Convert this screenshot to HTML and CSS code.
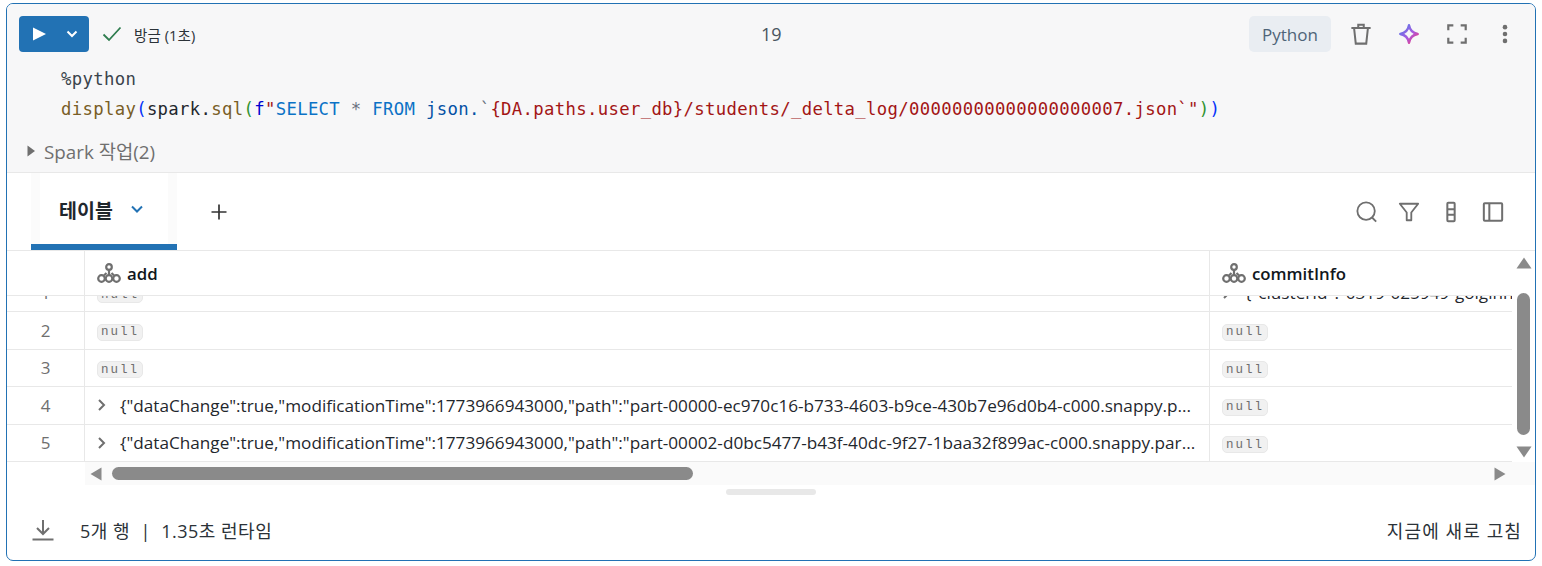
FILE: index.html
```html
<!DOCTYPE html>
<html lang="ko">
<head>
<meta charset="utf-8">
<title>Notebook cell</title>
<link rel="stylesheet" href="styles.css">
</head>
<body>
<div class="cell">
  <section class="editor">
    <div class="toolbar">
      <div class="run">
        <svg class="run-play" viewBox="0 0 14 14"><path d="M1 0.500v13L14 7z" fill="#fff"/></svg>
        <svg class="run-caret" viewBox="0 0 14 14"><path d="M2.500 4.500 7 9l4.500-4.500" fill="none" stroke="#fff" stroke-width="2"/></svg>
      </div>
      <svg class="check" viewBox="0 0 20 16"><path d="M1.500 8.500 7 14 18.500 1.500" fill="none" stroke="#2f7d4f" stroke-width="1.800"/></svg>
      <span class="status">방금 (1초)</span>
      <span class="cell-no">19</span>
      <div class="tools">
        <span class="lang">Python</span>
        <svg class="tool" viewBox="0 0 24 24" fill="none" stroke="#6f6f6f" stroke-width="2.200"><path d="M1.500 5.500h21M9 5V2h6v3M4.500 6l1.800 16.500h11.400L19.500 6"/></svg>
        <svg class="tool" viewBox="0 0 24 24" fill="none" stroke="url(#spark)" stroke-width="2.600"><defs><linearGradient id="spark" x1="0" y1="0" x2="1" y2="1"><stop offset="0" stop-color="#4f7dea"/><stop offset=".55" stop-color="#a85be0"/><stop offset="1" stop-color="#f8356f"/></linearGradient></defs><path d="M12 2.500C13 8 15.500 11 21.500 12 15.500 13 13 16 12 21.500 11 16 8.500 13 2.500 12 8.500 11 11 8 12 2.500Z" stroke-linejoin="round"/></svg>
        <svg class="tool" viewBox="0 0 24 24" fill="none" stroke="#6f6f6f" stroke-width="2.400"><path d="M8 2.500H2.500V8M16 2.500h5.500V8M2.500 16v5.500H8M21.500 16v5.500H16"/></svg>
        <svg class="tool" viewBox="0 0 24 24" fill="#6f6f6f"><circle cx="12" cy="4.500" r="2.500"/><circle cx="12" cy="12" r="2.500"/><circle cx="12" cy="19.500" r="2.500"/></svg>
      </div>
    </div>
    <pre class="code"><span class="k-mag">%python</span>
<span class="k-fn">display</span><span class="k-p1">(</span>spark.<span class="k-fn">sql</span><span class="k-p2">(</span><span class="k-kw">f</span><span class="k-str">"</span><span class="k-sql">SELECT</span> <span class="k-star">*</span> <span class="k-sql">FROM</span> <span class="k-json">json.</span><span class="k-star">`</span><span class="k-str">{DA.paths.user_db}/students/_delta_log/00000000000000000007.json`"</span><span class="k-p2">)</span><span class="k-p1">)</span></pre>
    <div class="jobs"><svg class="jobs-caret" viewBox="0 0 8 12"><path d="M0.500 0.500v11L8 6z" fill="#6f6f6f"/></svg><span>Spark 작업(2)</span></div>
  </section>

  <section class="tabs">
    <div class="tab">
      <span class="tab-name">테이블</span>
      <svg class="tab-caret" viewBox="0 0 14 14"><path d="M2 4.500 7 9.500l5-5" fill="none" stroke="#2272b4" stroke-width="2"/></svg>
    </div>
    <svg class="plus" viewBox="0 0 18 18"><path d="M9 1.500v15M1.500 9h15" stroke="#333" stroke-width="1.700"/></svg>
    <div class="tab-tools">
      <svg class="tab-tool" viewBox="0 0 24 24" fill="none" stroke="#6f6f6f" stroke-width="2"><circle cx="11" cy="11" r="9.500"/><path d="m17.500 18 4.500 4.500"/></svg>
      <svg class="tab-tool" viewBox="0 0 24 24" fill="none" stroke="#6f6f6f" stroke-width="2" stroke-linejoin="round"><path d="M2 3h20l-7.500 9.500V21h-5v-8.500z"/></svg>
      <svg class="tab-tool" viewBox="0 0 24 24" fill="none" stroke="#6f6f6f" stroke-width="2.200"><rect x="8" y="2" width="8" height="20" rx="1"/><path d="M8 9h8M8 15h8"/></svg>
      <svg class="tab-tool" viewBox="0 0 24 24" fill="none" stroke="#6f6f6f" stroke-width="2.200"><rect x="2" y="2.500" width="20" height="19" rx="1"/><path d="M8 2.500v19"/></svg>
    </div>
  </section>

  <section class="grid-wrap">
    <div class="grid-top">
      <div class="grid-main">
        <div class="thead">
          <div class="c-num"></div>
          <div class="c-add th"><svg class="struct" viewBox="0 0 24 20"><g fill="none" stroke="#6f6f6f" stroke-width="2.200"><circle cx="12" cy="4" r="2.800"/><circle cx="4.500" cy="15.500" r="3.300"/><circle cx="12" cy="15.500" r="3.300"/><circle cx="19.500" cy="15.500" r="3.300"/><path d="M12 7v5M9.500 10 7 12.500M14.500 10l2.500 2.500"/></g></svg><span>add</span></div>
          <div class="c-commit th"><svg class="struct" viewBox="0 0 24 20"><g fill="none" stroke="#6f6f6f" stroke-width="2.200"><circle cx="12" cy="4" r="2.800"/><circle cx="4.500" cy="15.500" r="3.300"/><circle cx="12" cy="15.500" r="3.300"/><circle cx="19.500" cy="15.500" r="3.300"/><path d="M12 7v5M9.500 10 7 12.500M14.500 10l2.500 2.500"/></g></svg><span>commitInfo</span></div>
        </div>
        <div class="tbody">
          <div class="tscroll">
            <div class="row">
              <div class="c-num">1</div>
              <div class="c-add"><span class="null">null</span></div>
              <div class="c-commit"><svg class="expand" viewBox="0 0 10 14"><path d="M2 2l5 5-5 5" fill="none" stroke="#6f6f6f" stroke-width="2"/></svg><span class="json">{"clusterId":"0319-025949-golgihn</span></div>
            </div>
            <div class="row">
              <div class="c-num">2</div>
              <div class="c-add"><span class="null">null</span></div>
              <div class="c-commit"><span class="null">null</span></div>
            </div>
            <div class="row">
              <div class="c-num">3</div>
              <div class="c-add"><span class="null">null</span></div>
              <div class="c-commit"><span class="null">null</span></div>
            </div>
            <div class="row">
              <div class="c-num">4</div>
              <div class="c-add"><svg class="expand" viewBox="0 0 10 14"><path d="M2 2l5 5-5 5" fill="none" stroke="#6f6f6f" stroke-width="2"/></svg><span class="json">{"dataChange":true,"modificationTime":1773966943000,"path":"part-00000-ec970c16-b733-4603-b9ce-430b7e96d0b4-c000.snappy.p...</span></div>
              <div class="c-commit"><span class="null">null</span></div>
            </div>
            <div class="row">
              <div class="c-num">5</div>
              <div class="c-add"><svg class="expand" viewBox="0 0 10 14"><path d="M2 2l5 5-5 5" fill="none" stroke="#6f6f6f" stroke-width="2"/></svg><span class="json">{"dataChange":true,"modificationTime":1773966943000,"path":"part-00002-d0bc5477-b43f-40dc-9f27-1baa32f899ac-c000.snappy.par...</span></div>
              <div class="c-commit"><span class="null">null</span></div>
            </div>
          </div>
        </div>
      </div>
      <div class="vbar">
        <svg class="varrow" viewBox="0 0 16 12"><path d="M0.500 11.500h15L8 0.500z" fill="#8a8a8a"/></svg>
        <div class="vbar-thumb"></div>
        <svg class="varrow" viewBox="0 0 16 12"><path d="M0.500 0.500h15L8 11.500z" fill="#8a8a8a"/></svg>
      </div>
    </div>
    <div class="hbar">
      <svg class="arrow" viewBox="0 0 12 14"><path d="M11.500 0.500v13L0.500 7z" fill="#8a8a8a"/></svg>
      <div class="hbar-track"><div class="hbar-thumb"></div></div>
      <svg class="arrow" viewBox="0 0 12 14"><path d="M0.500 0.500v13L11.500 7z" fill="#8a8a8a"/></svg>
    </div>
  </section>

  <div class="handle-row"><div class="handle"></div></div>

  <footer class="foot">
    <svg class="download" viewBox="0 0 22 22" fill="none" stroke="#6f6f6f" stroke-width="2"><path d="M11 1v13M5 9l6 6 6-6M0.500 20.500h21"/></svg>
    <span class="meta">5개 행 &nbsp;|&nbsp; 1.35초 런타임</span>
    <span class="refresh">지금에 새로 고침</span>
  </footer>
</div>
</body>
</html>
```
FILE: styles.css
```css
* { box-sizing: border-box; }
html, body { margin: 0; height: 100%; background: #fff; }
body {
  padding: 3px 6px 5px 6px;
  font-family: "Open Sans", "Noto Sans CJK KR", sans-serif;
  color: #1f272d;
  overflow: hidden;
}
.cell {
  height: 558px;
  border: 1px solid #2272b4;
  border-radius: 7px;
  overflow: hidden;
  display: flex;
  flex-direction: column;
  background: #fff;
}

/* editor */
.editor {
  height: 169px;
  flex: none;
  background: #f7f7f8;
  border-bottom: 1px solid #e8e8e8;
  padding: 12px 0 0 12px;
}
.toolbar { display: flex; align-items: center; height: 36px; }
.run {
  width: 70px; height: 36px;
  background: #2272b4;
  border-radius: 4px;
  display: flex; align-items: center;
  padding-left: 13px;
  gap: 19px;
}
.run-play { width: 14px; height: 14px; }
.run-caret { width: 14px; height: 14px; }
.check { width: 20px; height: 16px; margin-left: 13px; }
.status { margin-left: 12px; font-size: 14.500px; width: 627px; letter-spacing: 0.100px; color: #2b3238; }
.cell-no { font-size: 18px; color: #4a5560; width: 488px; }
.tools { display: flex; align-items: center; }
.lang {
  width: 82px; height: 36px;
  background: #e9edf2;
  border-radius: 5px;
  font-size: 17px;
  color: #4f6478;
  display: flex; align-items: center; justify-content: center;
  margin-right: 19px;
}
.tool { width: 22px; height: 24px; margin-right: 26px; }
.tool:last-child { margin-right: 0; }

.code {
  margin: 12px 0 0 42px;
  font-family: "DejaVu Sans Mono", "Liberation Mono", monospace;
  font-size: 17.300px;
  letter-spacing: 0.330px;
  line-height: 30px;
  color: #1f272d;
}
.k-mag { color: #3a444c; }
.k-fn { color: #795e26; }
.k-p1 { color: #0431fa; }
.k-p2 { color: #319331; }
.k-kw { color: #0000d0; }
.k-str { color: #a31515; }
.k-sql { color: #0b72c6; }
.k-star { color: #6a7280; }
.k-json { color: #0451a5; }

.jobs {
  display: flex; align-items: center;
  margin: 15px 0 0 8px;
  height: 24px;
  font-size: 18.800px;
  color: #6f6f6f;
}
.jobs-caret { width: 8px; height: 12px; margin-right: 9px; }

/* tabs */
.tabs {
  flex: none;
  height: 78px;
  display: flex;
  align-items: flex-start;
  padding-left: 24px;
  border-bottom: 1px solid #e8e8e8;
}
.tab {
  width: 146px; height: 77px;
  border-bottom: 6px solid #2272b4;
  display: flex; align-items: center;
  padding-left: 28px;
  background: linear-gradient(90deg, #fbfbfb 0 9px, #fff 9px calc(100% - 9px), #fbfbfb calc(100% - 9px));
}
.tab-name { font-size: 19.500px; font-weight: 700; color: #1f272d; padding-top: 2px; }
.tab-caret { width: 14px; height: 14px; margin-left: 17px; }
.plus { width: 18px; height: 18px; margin: 30px 0 0 33px; }
.tab-tools { margin-left: auto; display: flex; gap: 20px; padding: 28px 31px 0 0; }
.tab-tool { width: 22px; height: 22px; }

/* grid */
.grid-wrap { flex: none; display: flex; flex-direction: column; height: 234px; }
.grid-top { flex: none; display: flex; height: 211px; }
.grid-main { flex: 1; min-width: 0; }
.thead, .row {
  display: grid;
  grid-template-columns: 78px 1125px 1fr;
}
.thead { height: 45px; border-bottom: 1px solid #e8e8e8; }
.c-num {
  border-right: 1px solid #e8e8e8;
  display: flex; align-items: center; justify-content: center;
  font-size: 17px;
  color: #6f6f6f;
}
.c-add { border-right: 1px solid #e8e8e8; }
.c-add, .c-commit {
  display: flex; align-items: center;
  padding-left: 12px;
  white-space: nowrap;
  overflow: hidden;
  min-width: 0;
}
.th { font-size: 16.800px; font-weight: 600; color: #11171c; }
.struct { width: 24px; height: 20px; margin-right: 6px; flex: none; }
.tbody { height: 166px; overflow: hidden; }
.tscroll { margin-top: -21.500px; }
.row { height: 37.500px; border-bottom: 1px solid #e8e8e8; }
.null {
  font-family: "Liberation Mono", "DejaVu Sans Mono", monospace;
  font-size: 12.500px;
  letter-spacing: 2px;
  width: 46px; height: 17px;
  margin-top: 4px;
  background: #f1f1f1;
  border: 1px solid #e8e8e8;
  border-radius: 5px;
  color: #6f6f6f;
  display: flex; align-items: center; justify-content: center;
  line-height: 1;
}
.expand { width: 10px; height: 14px; margin-right: 13px; flex: none; }
.json { font-size: 17.160px; color: #1f272d; }

.hbar {
  height: 23px;
  margin-left: 78px;
  background: #fafafa;
  display: flex; align-items: center;
  padding: 0 29px 0 5px;
}
.arrow { width: 12px; height: 14px; flex: none; }
.hbar-track { flex: 1; padding: 0 0 0 10px; }
.hbar-thumb { width: 581px; height: 13px; background: #8a8a8a; border-radius: 7px; }

.vbar {
  width: 23px; flex: none;
  display: flex; flex-direction: column; align-items: center;
  padding-top: 6px;
}
.varrow { width: 16px; height: 12px; flex: none; }
.vbar-thumb { width: 13px; height: 142px; margin: 24px 0 11px; background: #8a8a8a; border-radius: 7px; }

.handle-row { flex: none; height: 17px; display: flex; justify-content: center; padding-top: 4px; }
.handle { width: 90px; height: 6px; background: #e8e8e8; border-radius: 3px; }

.foot {
  flex: 1;
  display: flex; align-items: center;
  padding: 0 13px 3px 25px;
  color: #2b3238;
}
.download { width: 22px; height: 22px; margin-right: 26px; }
.meta { font-size: 18px; letter-spacing: 0.500px; }
.refresh { margin-left: auto; font-size: 18px; letter-spacing: 1.100px; }
```
